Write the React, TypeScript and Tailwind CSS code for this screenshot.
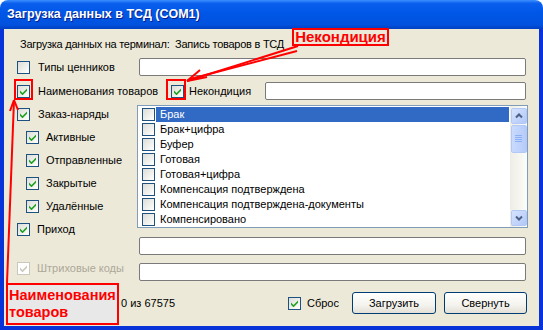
import type { ReactNode } from "react"

const items = [
  "Брак",
  "Брак+цифра",
  "Буфер",
  "Готовая",
  "Готовая+цифра",
  "Компенсация подтверждена",
  "Компенсация подтверждена-документы",
  "Компенсировано",
]

function Check({ checked = false, disabled = false }: { checked?: boolean; disabled?: boolean }) {
  return (
    <span
      className={`flex h-[13px] w-[13px] shrink-0 items-center justify-center border ${
        disabled ? "border-[#CAC8BB] bg-white" : "border-[#1C5180] bg-[linear-gradient(135deg,#DCDCD7,#FFFFFF)]"
      }`}
    >
      {checked && (
        <svg width="7" height="7" viewBox="0 0 7 7">
          <polygon points="0,2.5 2.5,5 7,0.5 7,2.8 2.5,7.3 0,4.8" fill={disabled ? "#CAC8BB" : "#21A121"} />
        </svg>
      )}
    </span>
  )
}

function Field({ className = "" }: { className?: string }) {
  return <div className={`h-[18px] rounded-[2px] border border-[#7A7A7A] bg-white ${className}`} />
}

function Row({ children, sub = false }: { children: ReactNode; sub?: boolean }) {
  return <div className={`flex h-[23px] items-center ${sub ? "pl-[22px]" : "pl-[13px]"}`}>{children}</div>
}

function Button({ label, className = "" }: { label: string; className?: string }) {
  return (
    <div
      className={`flex h-[22px] items-center justify-center rounded-[3px] border border-[#003C74] bg-[linear-gradient(180deg,#FFFFFF_0%,#F4F3EE_60%,#E3E0D6_100%)] ${className}`}
    >
      {label}
    </div>
  )
}

function ScrollBtn({ down = false }: { down?: boolean }) {
  return (
    <div className="flex h-[16px] w-[16px] items-center justify-center rounded-[2px] border border-[#B4C8F6] bg-[linear-gradient(135deg,#D6E3FE,#B2C8F8)]">
      <svg width="8" height="6" viewBox="0 0 8 6">
        <polyline
          points={down ? "1,1.5 4,4.5 7,1.5" : "1,4.5 4,1.5 7,4.5"}
          fill="none"
          stroke="#4D6185"
          strokeWidth="2"
        />
      </svg>
    </div>
  )
}

export default function App() {
  return (
    <div className="relative h-[330px] w-[543px] font-['Liberation_Sans',Arial,sans-serif] text-[11px] text-black">
      <div className="flex h-full flex-col overflow-hidden rounded-t-[8px]">
        {/* title bar */}
        <div className="flex h-[29px] shrink-0 items-center bg-[linear-gradient(180deg,#3C8EFF_0%,#0A5FEE_12%,#0056E6_45%,#0052DE_85%,#0040C2_100%)] pl-[7px]">
          <span className="text-[12.5px] font-bold text-white [text-shadow:1px_1px_0_#0A1E8C]">
            Загрузка данных в ТСД (COM1)
          </span>
        </div>

        {/* client area */}
        <div className="flex-1 border-x-4 border-b-4 border-[#0733D8] bg-[#ECE9D8]">
          <div className="mt-[8px] flex h-[14px] items-center pl-[16px] tracking-[-0.25px]">
            Загрузка данных на терминал:&nbsp; Запись товаров в ТСД
          </div>

          <div className="mt-[7px] flex h-[18px] items-center">
            <div className="flex w-[135px] items-center pl-[13px]">
              <Check />
              <span className="ml-[8px]">Типы ценников</span>
            </div>
            <Field className="w-[387px]" />
          </div>

          <div className="mt-[6px] flex h-[18px] items-center">
            <div className="flex w-[167px] items-center pl-[13px]">
              <Check checked />
              <span className="ml-[8px]">Наименования товаров</span>
            </div>
            <div className="flex w-[94px] items-center">
              <Check checked />
              <span className="ml-[5px]">Некондиция</span>
            </div>
            <Field className="w-[261px]" />
          </div>

          <div className="mt-[3px] flex">
            <div className="flex w-[133px] flex-col">
              <Row>
                <Check checked />
                <span className="ml-[8px]">Заказ-наряды</span>
              </Row>
              {["Активные", "Отправленные", "Закрытые", "Удалённые"].map((t) => (
                <Row sub key={t}>
                  <Check checked />
                  <span className="ml-[7px]">{t}</span>
                </Row>
              ))}
              <Row>
                <Check checked />
                <span className="ml-[7px]">Приход</span>
              </Row>
              <div className="mt-[16px]">
                <Row>
                  <Check checked disabled />
                  <span className="ml-[7px] text-[#ACA899]">Штриховые коды</span>
                </Row>
              </div>
            </div>

            <div className="flex flex-col">
              <div className="mt-[2px] flex h-[123px] w-[391px] overflow-hidden border border-[#7F9DB9] bg-white">
                <div className="flex-1 pt-[1px] pr-[1px]">
                  {items.map((t, i) => (
                    <div key={t} className="flex h-[15px] items-center pl-[4px]">
                      <Check />
                      <span
                        className={`ml-[1px] flex h-[15px] flex-1 items-center pl-[4px] ${
                          i === 0 ? "bg-[#316AC5] text-white" : ""
                        }`}
                      >
                        {t}
                      </span>
                    </div>
                  ))}
                </div>
                <div className="flex w-[17px] flex-col items-center bg-[linear-gradient(90deg,#EEEDE5,#FCFCF9)] pt-[2px] pb-[1px]">
                  <ScrollBtn />
                  <div className="mt-[1px] flex h-[28px] w-[16px] items-center justify-center rounded-[2px] border border-[#B4C8F6] bg-[linear-gradient(90deg,#C9DAFD,#B6CBF9)]">
                    <svg width="7" height="8" viewBox="0 0 7 8">
                      {[0, 2, 4, 6].map((y) => (
                        <rect key={y} x="0" y={y} width="7" height="1" fill="#8CB0F8" />
                      ))}
                    </svg>
                  </div>
                  <div className="flex-1" />
                  <ScrollBtn down />
                </div>
              </div>
              <Field className="mt-[9px] ml-[2px] w-[387px]" />
              <Field className="mt-[8px] ml-[2px] w-[387px]" />
            </div>
          </div>

          <div className="mt-[11px] flex h-[22px] items-center pl-[117px]">
            <span className="w-[167px]">0 из 67575</span>
            <Check checked />
            <span className="ml-[6px] w-[45px]">Сброс</span>
            <Button label="Загрузить" className="w-[84px]" />
            <Button label="Свернуть" className="ml-[8px] w-[83px]" />
          </div>
        </div>
      </div>

      {/* annotations */}
      <div className="absolute left-[292px] top-[28px] flex h-[18px] w-[97px] items-center justify-center border-2 border-[#FF0000] bg-[#ECE9D8] text-[15px] font-bold text-[#FF0000]">
        Некондиция
      </div>
      <div className="absolute left-[14px] top-[79px] h-[21px] w-[19px] border-2 border-[#FF0000]" />
      <div className="absolute left-[166px] top-[79px] h-[21px] w-[20px] border-2 border-[#FF0000]" />
      <div className="absolute left-[6px] top-[283px] flex h-[42px] w-[113px] flex-col justify-center border-2 border-[#FF0000] bg-[#E8E8E8] pl-[1px] text-[14.5px] font-bold leading-[17px] text-[#FF0000]">
        <span>Наименования</span>
        <span>товаров</span>
      </div>
      <svg className="pointer-events-none absolute left-0 top-0" width="543" height="330">
        <g stroke="#FF0000" strokeWidth="2" fill="none">
          <line x1="298" y1="46" x2="187" y2="81" />
          <line x1="297" y1="51" x2="190" y2="79" />
          <line x1="200" y1="70" x2="187" y2="81" />
          <line x1="207" y1="77" x2="187" y2="81" />
          <line x1="7" y1="283" x2="14" y2="100" />
          <line x1="10" y1="111" x2="14" y2="100" />
          <line x1="18" y1="110" x2="14" y2="100" />
        </g>
      </svg>
    </div>
  )
}
